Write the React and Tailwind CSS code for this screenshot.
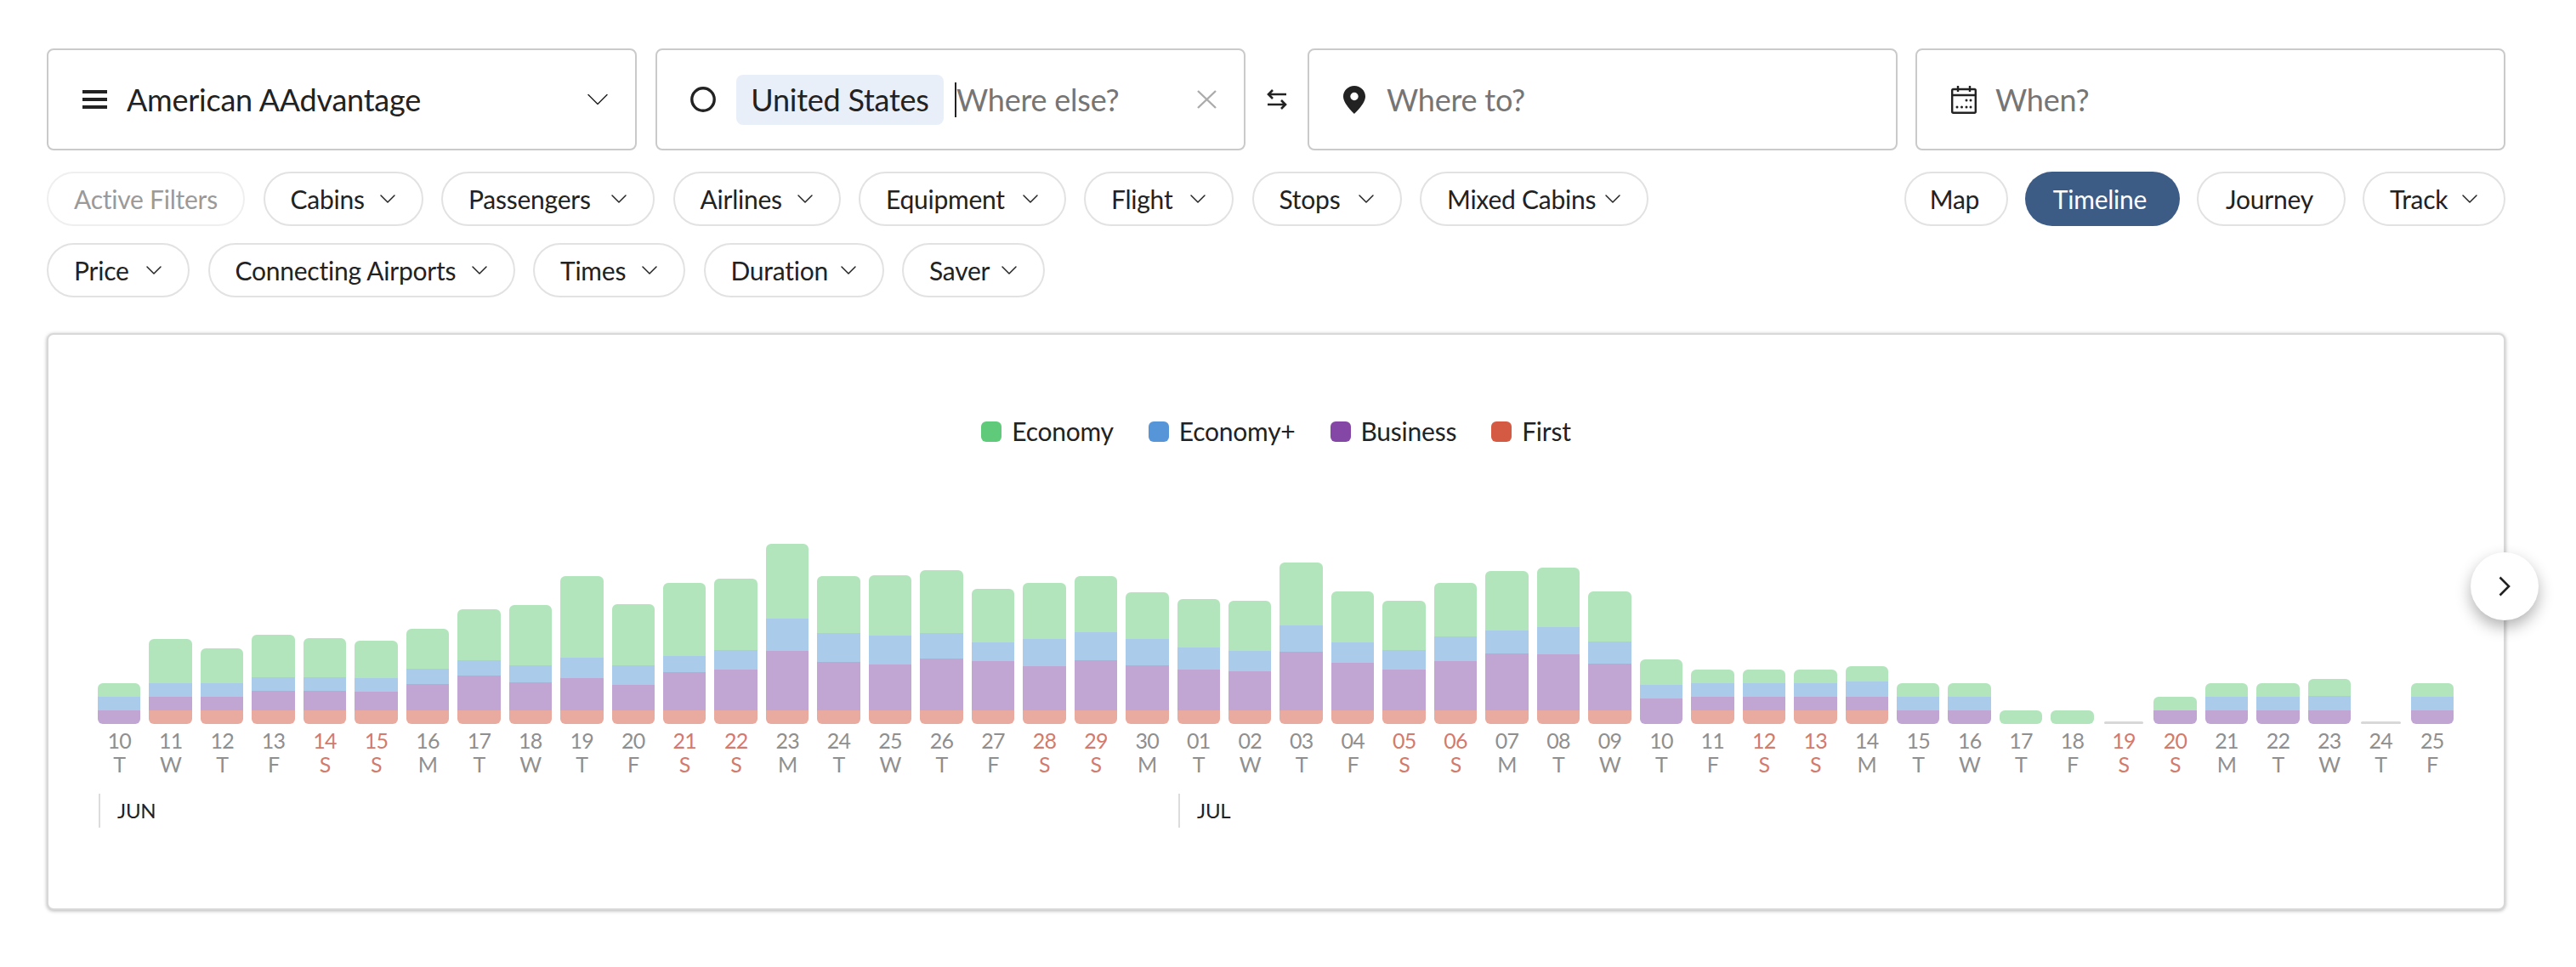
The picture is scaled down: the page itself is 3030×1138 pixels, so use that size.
import { ChevronDown } from 'lucide-react'

const font = { fontFamily: 'Lato, sans-serif' }

// top of each colour band in px from the chart top; null when the band is missing
const bars = [
  ['10', 'T', 552, 600, 648, null], ['11', 'W', 396, 552, 600, 648], ['12', 'T', 429, 552, 600, 648],
  ['13', 'F', 381, 531, 579, 648], ['14', 'S', 393, 531, 579, 648], ['15', 'S', 402, 534, 582, 648],
  ['16', 'M', 360, 501, 555, 648], ['17', 'T', 291, 471, 525, 648], ['18', 'W', 276, 489, 549, 648],
  ['19', 'T', 174, 462, 534, 648], ['20', 'F', 273, 489, 558, 648], ['21', 'S', 198, 456, 513, 648],
  ['22', 'S', 183, 435, 504, 648], ['23', 'M', 60, 324, 438, 648], ['24', 'T', 174, 375, 477, 648],
  ['25', 'W', 171, 384, 486, 648], ['26', 'T', 153, 375, 465, 648], ['27', 'F', 219, 408, 474, 648],
  ['28', 'S', 198, 396, 492, 648], ['29', 'S', 174, 372, 471, 648], ['30', 'M', 231, 396, 489, 648],
  ['01', 'T', 255, 426, 504, 648], ['02', 'W', 261, 438, 510, 648], ['03', 'T', 126, 348, 441, 648],
  ['04', 'F', 228, 408, 480, 648], ['05', 'S', 261, 435, 504, 648], ['06', 'S', 198, 387, 474, 648],
  ['07', 'M', 156, 366, 447, 648], ['08', 'T', 144, 354, 450, 648], ['09', 'W', 228, 405, 483, 648],
  ['10', 'T', 468, 558, 606, null], ['11', 'F', 504, 552, 600, 648], ['12', 'S', 504, 552, 600, 648],
  ['13', 'S', 504, 552, 600, 648], ['14', 'M', 492, 546, 600, 648], ['15', 'T', 552, 600, 648, null],
  ['16', 'W', 552, 600, 648, null], ['17', 'T', 648, null, null, null], ['18', 'F', 648, null, null, null],
  ['19', 'S', null, null, null, null], ['20', 'S', 600, null, 648, null], ['21', 'M', 552, 600, 648, null],
  ['22', 'T', 552, 600, 648, null], ['23', 'W', 537, 597, 648, null], ['24', 'T', null, null, null, null],
  ['25', 'F', 552, 600, 648, null],
]

const BASE = 696
const bandColors = ['bg-[#b2e5bc]', 'bg-[#abcbeb]', 'bg-[#c1a5d2]', 'bg-[#e9aba0]']

const filterRows = [
  [
    ['Cabins', 'w-[188px]'],
    ['Passengers', 'w-[251px]'],
    ['Airlines', 'w-[197px]'],
    ['Equipment', 'w-[243.5px]'],
    ['Flight', 'w-[176px]'],
    ['Stops', 'w-[176px]'],
    ['Mixed Cabins', 'w-[269px]'],
  ],
  [
    ['Price', 'w-[168px]'],
    ['Connecting Airports', 'w-[361px]'],
    ['Times', 'w-[179px]'],
    ['Duration', 'w-[212px]'],
    ['Saver', 'w-[168px]'],
  ],
]

const legend = [
  ['Economy', 'bg-[#5fcb7a]'],
  ['Economy+', 'bg-[#5695d8]'],
  ['Business', 'bg-[#8447a5]'],
  ['First', 'bg-[#d45a44]'],
]

const Chip = ({ label, className, arrow = true }) => (
  <div className={`h-16 flex items-center justify-between pl-[30px] pr-6 rounded-full border-2 border-[#e2e2e2] text-[30px] text-[#222] whitespace-nowrap ${className}`}>
    {label}
    {arrow && <ChevronDown size={32} strokeWidth={1.1} className="shrink-0 text-[#222]" />}
  </div>
)

const Box = ({ children, className = '' }) => (
  <div className={`h-[120px] w-[694px] shrink-0 flex items-center rounded-lg border-2 border-[#cacaca] bg-white text-[36px] ${className}`}>
    {children}
  </div>
)

const Bar = ({ tops }) => {
  const present = tops.filter((t) => t !== null)
  if (!present.length) {
    return <div className="h-[3px] mx-[7px] rounded-full bg-[#d8d8d8]" />
  }
  return (
    <div className="mx-[5px] flex flex-col rounded-md overflow-hidden">
      {tops.map((top, i) => {
        if (top === null) return null
        const next = tops.slice(i + 1).find((t) => t !== null) ?? BASE
        return <div key={i} className={bandColors[i]} style={{ height: (next - top) / 3 }} />
      })}
    </div>
  )
}

export default function App() {
  return (
    <div className="min-h-screen bg-white pl-[55px] pr-[83px] pt-[57px] tracking-[-0.015em]" style={font}>
      {/* search row */}
      <div className="flex items-center">
        <Box className="pl-10 pr-[22px] mr-[22px]">
          <svg width="29" height="22" viewBox="0 0 29 22" className="shrink-0 text-[#222]">
            <path d="M0 2h29M0 11h29M0 20h29" stroke="currentColor" strokeWidth="4" />
          </svg>
          <span className="ml-[23px] flex-1 text-[#222]">American AAdvantage</span>
          <ChevronDown size={44} strokeWidth={0.8} className="shrink-0 text-[#222]" />
        </Box>
        <Box className="pl-[39px] pr-[31px]">
          <svg width="30" height="30" viewBox="0 0 30 30" className="shrink-0 text-[#222]">
            <circle cx="15" cy="15" r="13.2" fill="none" stroke="currentColor" strokeWidth="3.4" />
          </svg>
          <span className="ml-6 h-[59px] w-[244px] shrink-0 flex items-center justify-center rounded-lg bg-[#e9eff8] text-[#222]">United States</span>
          <span className="ml-[13px] w-[2px] h-[41px] bg-[#222]" />
          <span className="flex-1 text-[#757575]">Where else?</span>
          <svg width="25" height="24" viewBox="0 0 25 24" className="shrink-0 text-[#ababab]">
            <path d="M2 2l21 20M23 2L2 22" stroke="currentColor" strokeWidth="2.4" />
          </svg>
        </Box>
        <div className="w-[73px] flex justify-center shrink-0">
          <svg width="24" height="24" viewBox="0 0 24 24" fill="none" stroke="#222" strokeWidth="2.6" className="shrink-0">
            <path d="M23 6H2M7 1L2 6l5 5M1 18h21M17 13l5 5-5 5" />
          </svg>
        </div>
        <Box className="pl-[40px] mr-[21px]">
          <svg width="26" height="33" viewBox="0 0 26 33" className="shrink-0 text-[#222]">
            <path fillRule="evenodd" fill="currentColor" d="M13 0C5.8 0 0 5.6 0 12.6 0 21.5 13 33 13 33s13-11.5 13-20.4C26 5.6 20.2 0 13 0zm0 17.2a4.7 4.7 0 1 1 0-9.4 4.7 4.7 0 0 1 0 9.4z" />
          </svg>
          <span className="ml-[25px] text-[#757575]">Where to?</span>
        </Box>
        <Box className="pl-10">
          <svg width="30" height="33" viewBox="0 0 30 33" fill="none" stroke="#222" strokeWidth="2.4" className="shrink-0">
            <rect x="1.2" y="4" width="27.6" height="27.8" rx="1.5" />
            <path d="M1 11h28M8 0v7M22 0v7" />
            <g fill="#222" stroke="none">
              <circle cx="18" cy="17" r="1.5" /><circle cx="23" cy="17" r="1.5" />
              <circle cx="7" cy="25" r="1.5" /><circle cx="12.5" cy="25" r="1.5" /><circle cx="18" cy="25" r="1.5" /><circle cx="23" cy="25" r="1.5" />
            </g>
          </svg>
          <span className="ml-[22px] text-[#757575]">When?</span>
        </Box>
      </div>

      {/* filters */}
      <div className="mt-[25px] flex justify-between">
        <div className="flex gap-[21.5px]">
          <div className="w-[233px] h-16 flex items-center justify-center rounded-full border-2 border-[#efefef] text-[30px] text-[#9a9a9a] whitespace-nowrap">Active Filters</div>
          {filterRows[0].map(([label, w]) => <Chip key={label} label={label} className={w} />)}
        </div>
        <div className="flex gap-5">
          <Chip label="Map" arrow={false} className="w-[122px] !justify-center !pl-0 !pr-[4px]" />
          <div className="w-[182px] h-16 flex items-center justify-center pr-[6px] rounded-full bg-[#3c5b85] text-[30px] text-white">Timeline</div>
          <Chip label="Journey" arrow={false} className="w-[175px] !justify-center !pl-0 !pr-[4px]" />
          <Chip label="Track" className="w-[168px]" />
        </div>
      </div>
      <div className="mt-5 flex gap-[21.5px]">
        {filterRows[1].map(([label, w]) => <Chip key={label} label={label} className={w} />)}
      </div>

      {/* chart card */}
      <div className="relative mt-[42px] h-[679px] rounded-lg border-2 border-[#d8d8d8] bg-white shadow-[0_1px_4px_rgba(0,0,0,0.3)]">
        <div className="pt-[91px] flex items-center justify-center text-[30px] text-[#222]">
          {legend.map(([label, color], i) => (
            <div key={label} className={`flex items-center gap-3 ${i ? 'ml-[41px]' : ''}`}>
              <span className={`w-6 h-6 rounded-md ${color}`} />
              {label}
            </div>
          ))}
        </div>

        <div className="mt-[110px] ml-[53px] w-[2781px] grid grid-cols-[repeat(46,minmax(0,1fr))]">
          {bars.map(([day, weekday, ...tops], i) => {
            const isWeekend = weekday === 'S'
            return (
              <div key={i} className="flex flex-col">
                <div className="h-[212px] flex flex-col justify-end">
                  <Bar tops={tops} />
                </div>
                <div className={`mt-[5px] flex flex-col items-center text-[25px] leading-[28px] tracking-[-0.03em] ${isWeekend ? 'text-[#d47a6c]' : 'text-[#8f8f8f]'}`}>
                  <span>{day}</span>
                  <span>{weekday}</span>
                </div>
              </div>
            )
          })}
        </div>

        <div className="mt-[21px] ml-[59px] flex text-[24px] text-[#222]">
          <div className="w-[1270px] h-10 border-l-2 border-[#dcdcdc] pl-[20px] flex items-center">JUN</div>
          <div className="h-10 border-l-2 border-[#dcdcdc] pl-[20px] flex items-center">JUL</div>
        </div>

        <button className="absolute right-[-41px] top-[256px] w-20 h-20 rounded-full bg-white flex items-center justify-center shadow-[0_8px_18px_rgba(0,0,0,0.3)]">
          <svg width="14" height="24" viewBox="0 0 14 24" fill="none" stroke="#222" strokeWidth="2.6">
            <path d="M1.5 1.5L12 12 1.5 22.5" />
          </svg>
        </button>
      </div>
    </div>
  )
}
